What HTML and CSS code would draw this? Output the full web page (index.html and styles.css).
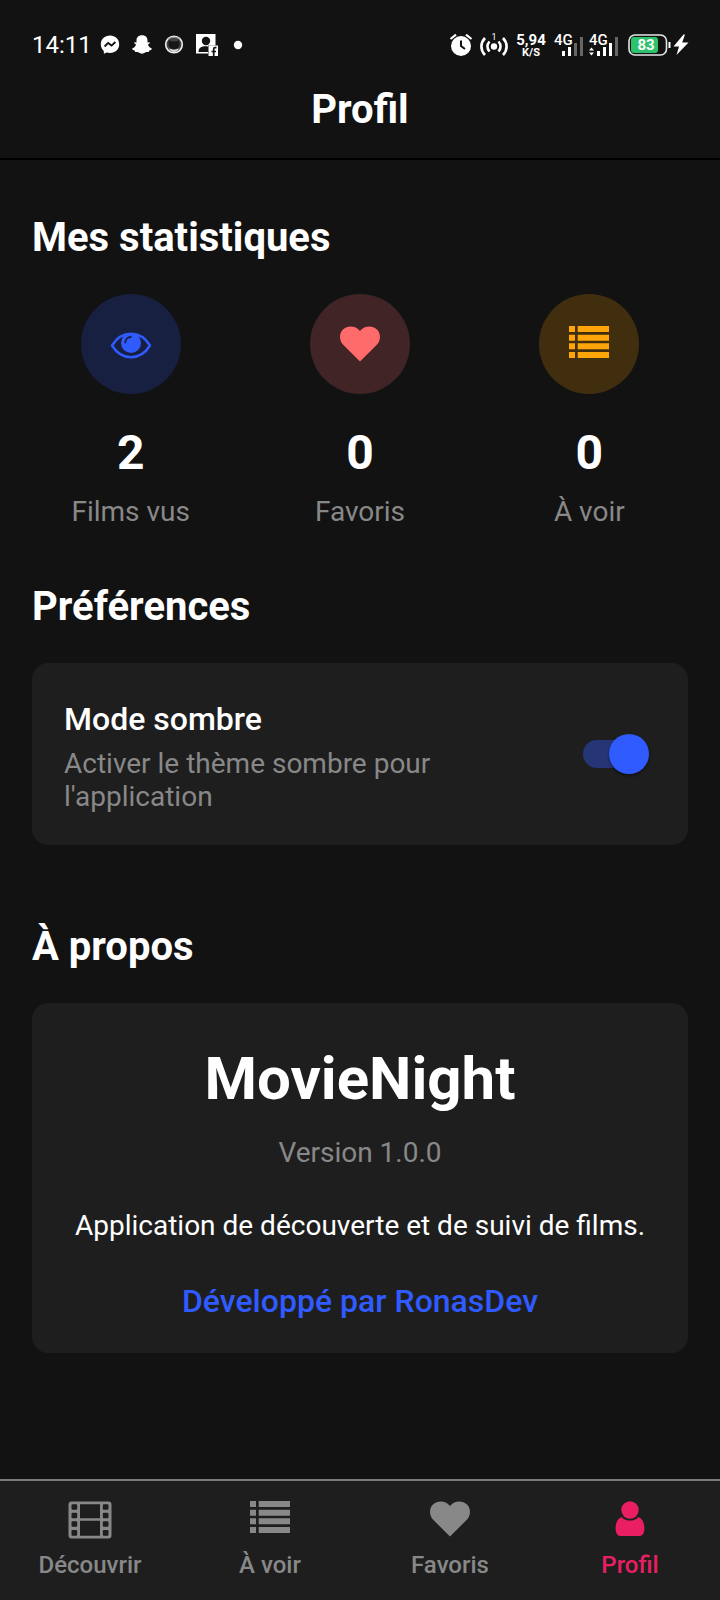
FILE: index.html
```html
<!DOCTYPE html>
<html lang="fr">
<head>
<meta charset="utf-8">
<meta name="viewport" content="width=device-width, initial-scale=1">
<title>Profil</title>
<link rel="stylesheet" href="styles.css">
</head>
<body>
<svg class="defs" aria-hidden="true">
  <symbol id="heart" viewBox="0 0 40 36"><path d="M20 35.500 3.400 19C-1 14.500-1 7.500 3 3.600 7.500-.8 15.500-.7 20 5 24.500-.7 32.500-.8 37 3.600c4 3.900 4 10.900-.4 15.400Z"/></symbol>
  <symbol id="list" viewBox="0 0 40 32"><path d="M0 0h6v6H0zM8.700 0H40v6H8.700zM0 8.700h6v6H0zM8.700 8.700H40v6H8.700zM0 17.300h6v6H0zM8.700 17.300H40v6H8.700zM0 26h6v6H0zM8.700 26H40v6H8.700z"/></symbol>
</svg>

<div class="status-bar">
  <div class="status-left">
    <time class="clock">14:11</time>
    <div class="notifications">
    <svg width="20" height="22" viewBox="0 0 20 22"><path fill="#fff" d="M10 1.500C4.700 1.500.8 5.300.8 10.300c0 2.700 1.100 5 3 6.600l.1 2.900 2.800-1.300c1 .3 2.200.5 3.300.5 5.300 0 9.200-3.800 9.200-8.700S15.300 1.500 10 1.500Z"/><path fill="none" stroke="#121212" stroke-width="1.900" d="m4.600 12.500 3.500-3.600 3.500 2.700 3.800-3.600"/></svg>
    <svg width="20" height="22" viewBox="0 0 20 22"><path fill="#fff" d="M10 1.200c-3.600 0-5.500 2.200-5.500 5v2.300l-2.100-.2c-.6.900.5 1.700 1.700 2.300-.6 2-1.900 3.200-3.900 3.900-.4 1.200 1.200 1.700 2.500 1.900.2.800.2 1.600 1 1.600 1.200 0 2-.3 3 .5 2 1.500 4.600 1.500 6.600 0 1-.8 1.800-.5 3-.5.8 0 .8-.8 1-1.600 1.300-.2 2.900-.7 2.500-1.900-2-.7-3.300-1.900-3.900-3.900 1.200-.6 2.300-1.400 1.700-2.300l-2.100.2V6.200c0-2.800-1.900-5-5.500-5Z"/></svg>
    <svg width="20" height="22" viewBox="0 0 20 22"><circle cx="10" cy="10.500" r="8.300" fill="#444" stroke="#eee" stroke-width="1.600"/><path fill="#161616" d="m5 6 2 1.300h6L15 6l.6 4c0 3-2 5-5.600 5s-5.600-2-5.600-5Z"/><path fill="none" stroke="#999" d="M4 5.500c3-3 9-3 12 0"/><path fill="#ddd" d="M5 14.500c3 1.500 7 1.500 10 0-2 4.500-8 4.500-10 0Z"/></svg>
    <svg width="22" height="22" viewBox="0 0 22 22"><path fill="#fff" d="M0 0h19.500v11.500H12V19.500H0Z"/><circle cx="10" cy="7" r="4.200" fill="#121212"/><path fill="#121212" d="M2.500 18c0-4.500 3-5.800 7-5.800 2 0 3 .4 3.500 1V18Z"/><path fill="#fff" d="M12.500 11.500H22V22h-9.500Z"/><path fill="none" stroke="#121212" stroke-width="1.700" d="M20.500 13.700H19c-1 0-1.300.6-1.300 1.600V22M15.500 17.500h4.500"/></svg>
    <svg width="16" height="22" viewBox="0 0 16 22"><circle cx="8" cy="11" r="4.200" fill="#fff"/></svg>
    </div>
  </div>
  <div class="status-right">
    <svg width="24" height="24" viewBox="0 0 24 24"><circle cx="13" cy="13" r="10" fill="#fff"/><path fill="none" stroke="#fff" stroke-width="2.200" d="M2.500 6 8 1.700M23.500 6 18 1.700"/><path fill="none" stroke="#121212" stroke-width="2" d="M13 7.500V13l4 3"/></svg>
    <svg width="28" height="24" viewBox="0 0 28 24"><circle cx="14" cy="13.500" r="3.200" fill="#fff"/><path fill="none" stroke="#fff" stroke-width="2.600" d="M9.500 8.500c-2.700 3-2.700 7 0 10M18.500 8.500c2.700 3 2.700 7 0 10M5 5c-4.800 5-4.800 12 0 17M23 5c4.800 5 4.800 12 0 17"/><text class="tiny" x="14" y="7" text-anchor="middle">1</text></svg>
    <div class="speed"><span>5,94</span><small>K/S</small></div>
    <svg width="66" height="24" viewBox="0 0 66 24"><g fill="#fff"><text class="network" x="0" y="12">4G</text><text class="network" x="35" y="12">4G</text><path d="M8 18h3v5H8zM14 14h3v9h-3zM43 18h3v5h-3zM49 14h3v9h-3zM55 10h3v13h-3zM35 17.500l2.500-3 2.500 3zM35 19.500l2.500 3 2.500-3z"/></g><path fill="#666" d="M20 10h3v13h-3zM26 4h3v19h-3zM61 4h3v19h-3z"/></svg>
    <svg width="60" height="24" viewBox="0 0 60 24"><rect x="1" y="2" width="37.500" height="20" rx="6" fill="none" stroke="#e6e6e6" stroke-width="1.600"/><rect x="3" y="4" width="27" height="16" rx="3" fill="#2dc26b"/><path fill="#fff" d="M40.500 9h2v6h-2zM55.500 1.500 45.500 13.500h5.500L48.500 22 60.500 9.500h-6.300L57 1.500Z"/><text class="battery" x="18" y="17" text-anchor="middle">83</text></svg>
  </div>
</div>

<header class="header"><h1>Profil</h1></header>

<main class="content">
  <section>
    <h2>Mes statistiques</h2>
    <div class="stats">
      <div class="stat">
        <div class="badge badge-seen"><svg width="40" height="40" viewBox="0 0 40 40"><path fill="none" stroke="currentColor" stroke-width="2.400" stroke-linejoin="round" d="M1 21.500C6 13.500 13 9.800 20 9.800S34 13.500 39 21.500C34 29.500 27 33.200 20 33.200S6 29.500 1 21.500Z"/><circle cx="20" cy="19" r="10" fill="currentColor"/><path fill="none" stroke="#182042" stroke-width="1.800" stroke-linecap="round" d="M14.300 18.500c0-3.200 2.300-5.500 5.500-5.500"/></svg></div>
        <strong>2</strong><span>Films vus</span>
      </div>
      <div class="stat">
        <div class="badge badge-favorite"><svg width="40" height="36"><use href="#heart"/></svg></div>
        <strong>0</strong><span>Favoris</span>
      </div>
      <div class="stat">
        <div class="badge badge-watch"><svg width="40" height="36"><use href="#list" height="32"/></svg></div>
        <strong>0</strong><span>À voir</span>
      </div>
    </div>
  </section>

  <section>
    <h2>Préférences</h2>
    <div class="card preference">
      <label for="dark-mode"><span class="preference-name">Mode sombre</span><span class="preference-text">Activer le thème sombre pour l'application</span></label>
      <input class="switch" id="dark-mode" type="checkbox" role="switch" checked>
    </div>
  </section>

  <section>
    <h2>À propos</h2>
    <div class="card about">
      <h3>MovieNight</h3>
      <p class="version">Version 1.0.0</p>
      <p class="description">Application de découverte et de suivi de films.</p>
      <p class="author">Développé par RonasDev</p>
    </div>
  </section>
</main>

<nav class="tabs">
  <a href="#decouvrir"><svg width="44" height="40" viewBox="0 0 44 40"><path fill="currentColor" fill-rule="evenodd" d="M3.500 1.500h37a3 3 0 0 1 3 3v31a3 3 0 0 1-3 3h-37a3 3 0 0 1-3-3v-31a3 3 0 0 1 3-3ZM12 4.300v14h20v-14ZM12 20.800v15h20v-15ZM4.500 4.300h3.700a1 1 0 0 1 1 1V8.800a1 1 0 0 1-1 1H4.500a1 1 0 0 1-1-1V5.300a1 1 0 0 1 1-1Zm0 8.500h3.700a1 1 0 0 1 1 1v3.500a1 1 0 0 1-1 1H4.500a1 1 0 0 1-1-1v-3.500a1 1 0 0 1 1-1Zm0 8.500h3.700a1 1 0 0 1 1 1v3.500a1 1 0 0 1-1 1H4.500a1 1 0 0 1-1-1v-3.500a1 1 0 0 1 1-1Zm0 8.800h3.700a1 1 0 0 1 1 1v3.700a1 1 0 0 1-1 1H4.500a1 1 0 0 1-1-1v-3.700a1 1 0 0 1 1-1ZM35.800 4.300h3.700a1 1 0 0 1 1 1V8.800a1 1 0 0 1-1 1h-3.700a1 1 0 0 1-1-1V5.300a1 1 0 0 1 1-1Zm0 8.500h3.700a1 1 0 0 1 1 1v3.500a1 1 0 0 1-1 1h-3.700a1 1 0 0 1-1-1v-3.500a1 1 0 0 1 1-1Zm0 8.500h3.700a1 1 0 0 1 1 1v3.500a1 1 0 0 1-1 1h-3.700a1 1 0 0 1-1-1v-3.500a1 1 0 0 1 1-1Zm0 8.800h3.700a1 1 0 0 1 1 1v3.700a1 1 0 0 1-1 1h-3.700a1 1 0 0 1-1-1v-3.700a1 1 0 0 1 1-1Z"/></svg>Découvrir</a>
  <a href="#a-voir"><svg width="40" height="40"><use href="#list" y="1" height="32"/></svg>À voir</a>
  <a href="#favoris"><svg width="40" height="40"><use href="#heart" y="1" height="36"/></svg>Favoris</a>
  <a class="active" href="#profil" aria-current="page"><svg width="40" height="40" viewBox="0 0 40 40"><g fill="currentColor"><circle cx="20" cy="10" r="8.700"/><path d="M11.800 17.200c2 2.100 4.800 3.400 8.200 3.400s6.200-1.300 8.200-3.400c3.800.5 6.200 5.600 6.200 11.300 0 4-1.700 7.500-4.900 7.500h-19c-3.200 0-4.900-3.500-4.900-7.500 0-5.700 2.400-10.800 6.200-11.300Z"/></g></svg>Profil</a>
</nav>
</body>
</html>
```
FILE: styles.css
```css
* { box-sizing: border-box; }

body {
  margin: 0;
  min-height: 100vh;
  display: flex;
  flex-direction: column;
  background: #121212;
  color: #fff;
  font-family: Roboto, "Noto Sans", sans-serif;
}

h1, h2, h3, p { margin: 0; }
svg { display: block; flex: none; overflow: visible; }
.defs { position: absolute; width: 0; height: 0; }

.status-bar {
  display: flex;
  justify-content: space-between;
  align-items: center;
  padding: 28px 32px 0;
}
.status-left, .status-right, .notifications { display: flex; align-items: center; height: 34px; }
.status-left { gap: 8px; }
.notifications { gap: 12px; }
.status-right { gap: 8px; }
.clock { font-size: 24px; line-height: 34px; }
.speed {
  width: 30px;
  font-size: 15px;
  font-weight: 700;
  line-height: 14px;
  text-align: center;
}
.speed span, .speed small { display: block; }
.speed small { font-size: 11px; line-height: 11px; }
.tiny { fill: #fff; font-size: 9px; }
.network { font-size: 15px; font-weight: 500; }
.battery { fill: #fff; font-size: 15px; font-weight: 700; }

.header {
  padding: 24px 32px 25px;
  border-bottom: 2px solid #000;
  text-align: center;
}
h1, h2 { font-size: 40px; line-height: 47px; font-weight: 700; }

.content {
  flex: 1;
  display: flex;
  flex-direction: column;
  padding: 54px 32px 64px;
}
h2 { margin-bottom: 33px; }

.stats {
  display: grid;
  grid-template-columns: repeat(3, 1fr);
  gap: 32px;
  margin-bottom: 55px;
}
.stat { display: flex; flex-direction: column; align-items: center; }
.badge {
  width: 100px;
  height: 100px;
  margin-bottom: 31px;
  border-radius: 50%;
  display: flex;
  align-items: center;
  justify-content: center;
}
.badge svg { fill: currentColor; }
.badge-seen { background: #182042; color: #2f5bff; }
.badge-favorite { background: #412425; color: #ff6b6b; }
.badge-watch { background: #412e0f; color: #ffa50a; }
.stat strong { font-size: 48px; line-height: 56px; margin-bottom: 14px; }
.stat span { font-size: 28px; line-height: 33px; color: #888; }

.card { background: #1e1e1e; border-radius: 16px; }
.preference {
  display: flex;
  align-items: center;
  gap: 16px;
  margin-bottom: 78px;
  padding: 32px;
}
.preference label { flex: 1; }
.preference-name, .preference-text { display: block; }
.preference-name { font-size: 32px; line-height: 48px; font-weight: 500; margin-bottom: 4px; }
.preference-text { font-size: 28px; line-height: 33px; color: #888; }

.switch {
  appearance: none;
  flex: none;
  width: 66px;
  height: 40px;
  margin: 0 7px;
  display: flex;
  align-items: center;
}
.switch::before {
  content: "";
  width: 56px;
  height: 28px;
  border-radius: 14px;
  background: #253576;
}
.switch::after {
  content: "";
  width: 40px;
  height: 40px;
  margin-left: -30px;
  border-radius: 50%;
  background: #2f5bff;
  box-shadow: 0 2px 3px #0006;
}

.about { padding: 40px 32px 33px; text-align: center; }
.about h3 { font-size: 60px; line-height: 71px; margin-bottom: 22px; }
.version, .description { font-size: 28px; line-height: 33px; margin-bottom: 40px; }
.version { color: #888; }
.author { font-size: 32px; line-height: 38px; font-weight: 500; color: #2f5bff; }

.tabs {
  display: grid;
  grid-template-columns: repeat(4, 1fr);
  padding: 19px 0 21px;
  border-top: 2px solid #7b7b7b;
  background: #1e1e1e;
}
.tabs a {
  display: flex;
  flex-direction: column;
  align-items: center;
  gap: 11px;
  color: #888;
  font-size: 24px;
  line-height: 28px;
  font-weight: 500;
  text-decoration: none;
}
.tabs svg { fill: currentColor; }
.tabs .active { color: #e91e63; }
```
